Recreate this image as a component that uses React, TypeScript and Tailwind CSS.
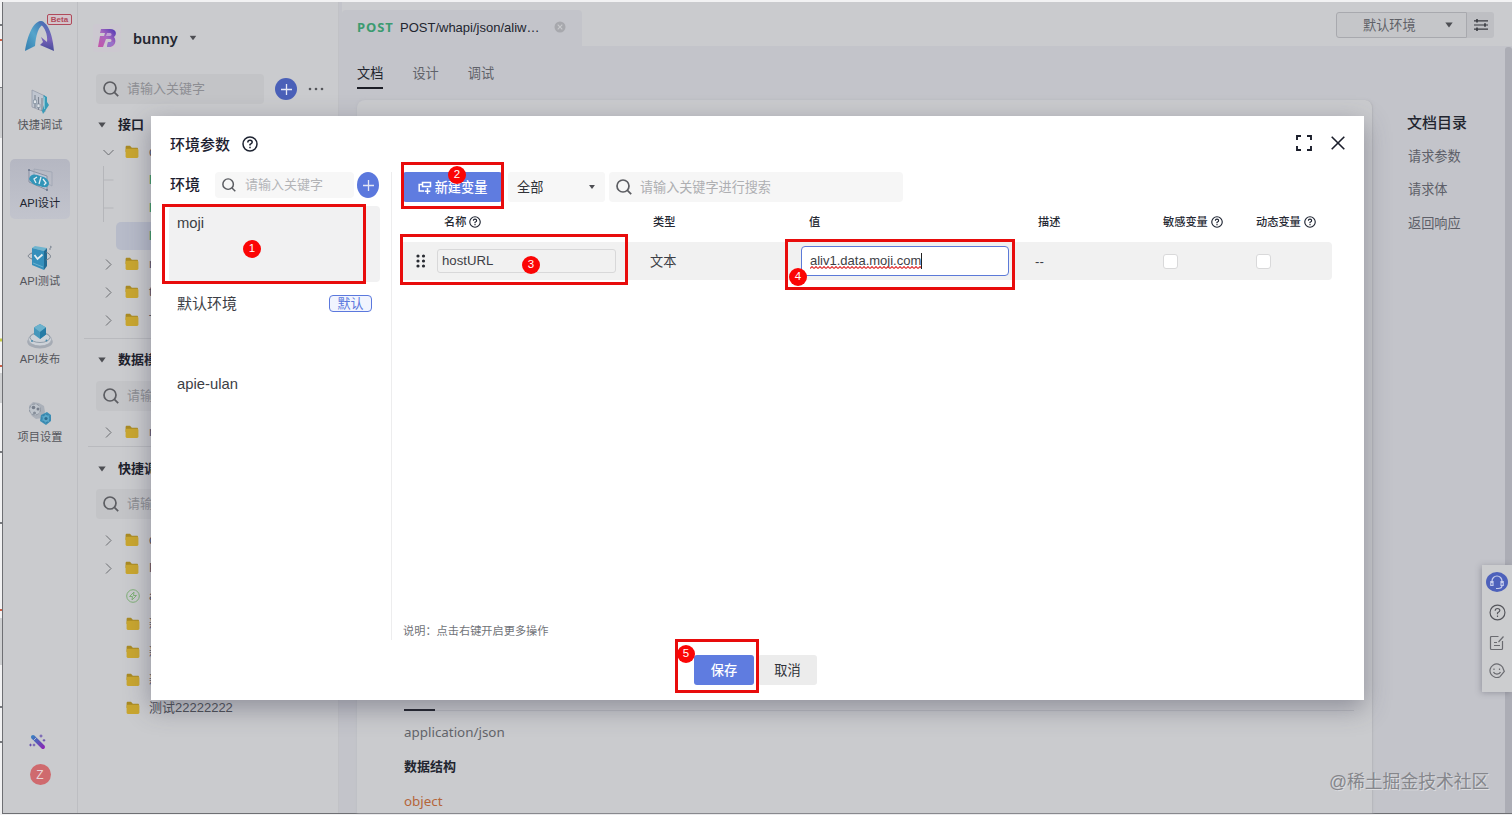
import type { ReactNode } from 'react';
import clsx from 'clsx';

function Search({ size = 16, color = '#5c5d62' }: { size?: number; color?: string }) {
  return (
    <svg width={size} height={size} viewBox="0 0 16 16" fill="none" stroke={color} strokeWidth="1.7" className="shrink-0">
      <circle cx="7" cy="7" r="6" />
      <path d="M11.4 11.4 15.2 15.2" />
    </svg>
  );
}

function Help({ size = 16, color = '#1c2230', stroke = 1.5 }: { size?: number; color?: string; stroke?: number }) {
  return (
    <svg width={size} height={size} viewBox="0 0 16 16" fill="none" stroke={color} strokeWidth={stroke} className="shrink-0">
      <circle cx="8" cy="8" r="7" />
      <path d="M5.8 6.4C5.8 5 6.8 4.2 8 4.2s2.2.8 2.2 2S9 7.8 8 8.4v1.2M8 10.8v1.4" />
    </svg>
  );
}

function Triangle({ className = '', color = '#4d4e53' }: { className?: string; color?: string }) {
  return (
    <svg width="8" height="6" viewBox="0 0 8 6" className={clsx('shrink-0', className)}>
      <path d="M.3.5h7.4L4 5.6z" fill={color} />
    </svg>
  );
}

function Plus({ size = 11 }: { size?: number }) {
  return (
    <svg width={size} height={size} viewBox="0 0 11 11" stroke="#e4e7f5" strokeWidth="1.3">
      <path d="M5.5 0v11M0 5.5h11" />
    </svg>
  );
}

function Folder() {
  return (
    <svg width="14" height="14" viewBox="0 0 14 14" className="shrink-0">
      <path d="M.6 2.200C.6 1.400 1 .8 1.800.8h3.200l1.800 1.900h5c.8 0 1.200.4 1.200 1.200V7H.6z" fill="#a98a24" />
      <rect x=".6" y="3.700" width="12.800" height="9.200" rx="1.300" fill="#c9a62f" />
    </svg>
  );
}

function Logo() {
  return (
    <svg width="32" height="32" viewBox="0 0 32 32">
      <defs>
        <linearGradient id="la" x1="0" y1="1" x2="1" y2="0">
          <stop offset="0" stopColor="#327cae" />
          <stop offset=".5" stopColor="#55a5cb" />
          <stop offset="1" stopColor="#3d6fae" />
        </linearGradient>
        <linearGradient id="lb" x1="0" y1="0" x2="0" y2="1">
          <stop offset="0" stopColor="#4b6fb5" />
          <stop offset=".6" stopColor="#7762b9" />
          <stop offset="1" stopColor="#464a99" />
        </linearGradient>
      </defs>
      <path d="M1 31C3 19 8 1.500 17 1c2 0 3 1 4 3-7 1-9 12-10 22z" fill="url(#la)" />
      <path d="M14 2c10-4 15 15 16 29l-14-6 3-3-2-5 6 5C24 13 20 6 14 2z" fill="url(#lb)" />
    </svg>
  );
}

function TuneIcon() {
  return (
    <svg width="26" height="26" viewBox="0 0 26 26">
      <path d="M5 1l13 6v16L5 18z" fill="#bfc5cf" stroke="#959ca9" strokeWidth=".8" />
      <path d="M8 6v13M11.500 8v13M15 9v13" stroke="#7e8794" strokeWidth="1.100" />
      <path d="M6.500 11h3v3.500h-3zM10 15h3v3.500h-3z" fill="#e0e4e9" stroke="#748494" strokeWidth=".6" />
      <path d="M16.500 6l3.500 2v5l2 3-6 9-1-3 2-6z" fill="#389bb8" />
      <path d="M17.500 8v12" stroke="#80c4d3" />
    </svg>
  );
}

function CodeIcon() {
  return (
    <svg width="28" height="26" viewBox="0 0 28 26" fill="none">
      <path d="M3 3l18 6v14L3 15z" fill="#bcc4d4" stroke="#838b9c" strokeWidth=".9" />
      <path d="M8 2l18 3v14L8 9z" stroke="#a1a7b4" strokeWidth=".9" />
      <path d="M3 12c2-7 8-4 11-3 4 1 8 2 9 7 0 5-5 5-9 3-5 0-9-3-11-7z" fill="#3295b8" />
      <path d="M11 10l-3 2 2 4M17 12l3 4-2 2M15 10l-2 7" stroke="#e4edf2" strokeWidth="1.300" />
      <circle cx="3" cy="3" r="1" fill="#69758b" />
      <circle cx="21" cy="23" r="1" fill="#69758b" />
    </svg>
  );
}

function TestIcon() {
  return (
    <svg width="28" height="26" viewBox="0 0 28 26" fill="none">
      <path d="M6 3l3-2 12 2-3 3z" fill="#6fb5cf" />
      <path d="M6 3l12 3v19L6 20z" fill="#358fbb" />
      <path d="M18 6l3-3v18l-3 4z" fill="#236b93" />
      <path d="M6 8c-5 2-5 4 0 6M20 7c6 3 6 6 0 8" stroke="#747d89" />
      <path d="M8.500 10l3 4 5-4.500" stroke="#e2edf1" strokeWidth="1.800" />
      <path d="M7 18l10 4" stroke="#69b1cf" />
      <path d="M24 1l1.500 1-1.500 1v2" stroke="#7e8794" />
    </svg>
  );
}

function PublishIcon() {
  return (
    <svg width="28" height="26" viewBox="0 0 28 26" fill="none">
      <ellipse cx="14" cy="18.800" rx="12.800" ry="6.700" fill="#a5abb4" />
      <ellipse cx="14" cy="16.500" rx="11.500" ry="6.500" fill="#cdd2d8" stroke="#a2a8b1" strokeWidth=".8" />
      <ellipse cx="14" cy="14.500" rx="10" ry="5" stroke="#8b99a5" strokeWidth=".9" />
      <path d="M14 1l6 3.500v7L14 16l-6-4.500v-7z" fill="#4697bb" />
      <path d="M14 1l6 3.500L14 9 8 4.500z" fill="#6cb2cd" />
      <path d="M14 9l6-4.500v7L14 16z" fill="#267ba5" />
      <circle cx="6" cy="18" r="1" fill="#478caf" />
      <circle cx="20.500" cy="17.500" r="1" fill="#478caf" />
    </svg>
  );
}

function GearsIcon() {
  return (
    <svg width="28" height="26" viewBox="0 0 28 26" fill="none">
      <path d="M3 5l4-4 6 1 5 3 1 6-3 6-6 1-4-3-3-5z" fill="#aab0b9" />
      <circle cx="9" cy="8.500" r="5.500" fill="#bfc5cc" stroke="#8f96a1" strokeWidth="1" strokeDasharray="3 1.500" />
      <circle cx="7.500" cy="6.500" r="1.800" fill="#767e8b" />
      <circle cx="12" cy="8" r="1.500" fill="#767e8b" />
      <circle cx="8.500" cy="12" r="1.500" fill="#858d99" />
      <path d="M15 14l6-3 4 3v6l-5 4-6-4z" fill="#3d8fb5" />
      <circle cx="20" cy="17.500" r="4" fill="#5ba8c9" stroke="#3884ab" strokeWidth="1.200" strokeDasharray="2.500 1.200" />
      <circle cx="20" cy="17.500" r="1.600" fill="#2d6d91" />
    </svg>
  );
}

function Wand() {
  return (
    <svg width="18" height="16" viewBox="0 0 18 16">
      <defs>
        <linearGradient id="w" gradientUnits="userSpaceOnUse" x1="3" y1="2" x2="15" y2="14">
          <stop offset="0" stopColor="#397ec0" />
          <stop offset=".5" stopColor="#5a55b8" />
          <stop offset="1" stopColor="#8d25b6" />
        </linearGradient>
      </defs>
      <path d="M4 3l10 10" stroke="url(#w)" strokeWidth="4" strokeLinecap="round" />
      <path d="M4.300 6.700l3-3" stroke="#b8c4d8" strokeWidth=".9" />
      <path d="M12 .5v3M10.500 2h3M15 5v2.600M13.700 6.300h2.600M1.500 9.700v2.600M.2 11h2.600M5 9.700v2.600M3.700 11h2.600" stroke="#674fae" strokeWidth="1" />
    </svg>
  );
}

const railItems: { label: string; icon: ReactNode; active?: boolean }[] = [
  { label: '快捷调试', icon: <TuneIcon /> },
  { label: 'API设计', icon: <CodeIcon />, active: true },
  { label: 'API测试', icon: <TestIcon /> },
  { label: 'API发布', icon: <PublishIcon /> },
  { label: '项目设置', icon: <GearsIcon /> },
];

function Rail() {
  return (
    <nav className="flex w-[75px] shrink-0 flex-col items-center border-r border-[#bdbec2]">
      <div className="flex h-[79px] items-start pt-[18px]">
        <div className="relative">
          <Logo />
          <span className="absolute -top-[6px] left-[23px] flex h-[11px] w-[25px] items-center justify-center rounded-[2px] border border-[#b04a5b] bg-[#d3c4ca] text-[8px] font-bold leading-none text-[#b04a5b]">
            Beta
          </span>
        </div>
      </div>
      <div className="flex flex-col gap-[18px]">
        {railItems.map((item) => (
          <div
            key={item.label}
            className={clsx(
              'flex h-[60px] w-[60px] flex-col items-center rounded-[5px] pt-[7px] text-[11.2px] whitespace-nowrap',
              item.active ? 'bg-linear-to-b from-[#b5b7c2] to-[#c2c4cd] text-[#20242f]' : 'text-[#54565c]',
            )}
          >
            <div className="flex h-[27px] items-center">{item.icon}</div>
            <span className="mt-[1px] leading-[18px]">{item.label}</span>
          </div>
        ))}
      </div>
      <div className="mt-auto flex flex-col items-center gap-[14px] pb-[28px]">
        <div className="-ml-[4px]">
          <Wand />
        </div>
        <div className="flex size-[21px] items-center justify-center rounded-full bg-[#cf6a6e] text-[12px] text-[#e8d4d7]">Z</div>
      </div>
    </nav>
  );
}

function Row({ kind, text, arrow, selected }: { kind: 'folder' | 'bolt' | 'post'; text: string; arrow?: 'right' | 'down'; selected?: boolean }) {
  return (
    <div className="flex h-[28px] items-center pl-[18px] text-[13px] text-[#4d4f56]">
      <div className={clsx('flex h-full flex-1 items-center rounded-l-[5px]', selected ? 'ml-[20px] bg-[#b7bbc9] pl-[10px]' : 'pl-[7px]')}>
        {!selected && (
          <div className="flex w-[13px] shrink-0 items-center">
            {arrow && (
              <svg width="11" height="11" viewBox="0 0 11 11" fill="none" stroke="#6b6c71" strokeWidth="1">
                <path d={arrow === 'down' ? 'M.5 3 5.500 8 10.500 3' : 'M3 .5 8 5.500 3 10.500'} />
              </svg>
            )}
            {kind === 'post' && (
              <svg width="12" height="28" viewBox="0 0 12 28" fill="none" stroke="#b5b6ba">
                <path d="M.5 0v28M.5 14h10" />
              </svg>
            )}
          </div>
        )}
        <div className={clsx('flex items-center', selected ? 'w-[23px]' : 'w-[33px]', !selected && (kind !== 'folder' || !arrow ? 'pl-[10px]' : 'pl-[9px]'))}>
          {kind === 'folder' && <Folder />}
          {kind === 'bolt' && (
            <svg width="14" height="14" viewBox="0 0 14 14" fill="none" stroke="#7fb077" strokeWidth="1">
              <circle cx="7" cy="7" r="6.300" />
              <path d="M8 3 3.500 7.500h3L6 11l4.500-4.500h-3z" />
            </svg>
          )}
        </div>
        <span className={clsx('whitespace-nowrap', kind === 'post' && 'text-[12px] font-bold text-[#2d9b68]')}>{text}</span>
      </div>
    </div>
  );
}

function SideSearch({ text, wide }: { text: string; wide?: boolean }) {
  return (
    <div className={clsx('flex h-[30px] items-center gap-[8px] rounded-[4px] bg-[#c3c4c7] pl-[7px] text-[13px] text-[#8d8e93]', wide ? 'w-[168px]' : 'w-[220px]')}>
      <Search />
      {text}
    </div>
  );
}

function SideTitle({ text }: { text: string }) {
  return (
    <div className="flex h-[28px] items-center gap-[12px] pt-px pl-[20px] text-[13px] font-bold text-[#1c202b]">
      <Triangle />
      {text}
    </div>
  );
}

function SidePanel() {
  return (
    <aside className="w-[261px] shrink-0 overflow-hidden border-r border-[#c1c2c6]">
      <div className="flex h-[72px] items-center pl-[15px]">
        <div className="flex size-[28px] items-center justify-center rounded-[3px] bg-[#ccc8d0]">
          <svg width="20" height="20" viewBox="0 0 20 20">
            <defs>
              <linearGradient id="b" x1="0" y1="1" x2="1" y2="0">
                <stop offset="0" stopColor="#c652a6" />
                <stop offset=".5" stopColor="#a869c0" />
                <stop offset="1" stopColor="#4a35b3" />
              </linearGradient>
            </defs>
            <path d="M4 1h9c7 0 7 6 4 8 3 4 1 10-5 10h-2l1-5h2c2 0 2-3 0-3H9L6 19H1L3 8h4l1-3H3z" fill="url(#b)" />
            <path d="M10 5h3c2 0 2 3 0 3h-4z" fill="#c1a3d4" />
            <path d="M10 19l1-5h6c-1 3-3 5-6 5z" fill="#9573c9" />
          </svg>
        </div>
        <span className="ml-[12px] w-[56px] font-['Noto_Sans'] text-[14.500px] leading-[20px] font-semibold text-[#22252f]">bunny</span>
        <Triangle className="scale-90" />
      </div>
      <div className="flex h-[30px] items-center pl-[18px]">
        <SideSearch text="请输入关键字" wide />
        <div className="ml-[11px] flex size-[22px] items-center justify-center rounded-full bg-[#4a60b8]">
          <Plus />
        </div>
        <svg width="16" height="4" viewBox="0 0 16 4" fill="#55565b" className="ml-[11px]">
          <circle cx="2" cy="2" r="1.300" />
          <circle cx="8" cy="2" r="1.300" />
          <circle cx="14" cy="2" r="1.300" />
        </svg>
      </div>
      <div className="mt-[6px]">
        <SideTitle text="接口" />
        <Row kind="folder" text="d" arrow="down" />
        <Row kind="post" text="P" />
        <Row kind="post" text="P" />
        <Row kind="post" text="P" selected />
        <Row kind="folder" text="m" arrow="right" />
        <Row kind="folder" text="t" arrow="right" />
        <Row kind="folder" text="T" arrow="right" />
      </div>
      <div className="mt-[4px] ml-[6px] border-t border-[#b9babe]" />
      <div className="mt-[6px]">
        <SideTitle text="数据模型" />
      </div>
      <div className="mt-[8px] mb-[7px] pl-[18px]">
        <SideSearch text="请输入" />
      </div>
      <Row kind="folder" text="m" arrow="right" />
      <div className="ml-[10px] border-t border-[#b9babe]" />
      <div className="mt-[7px]">
        <SideTitle text="快捷调试" />
      </div>
      <div className="mt-[7px] mb-[7px] pl-[18px]">
        <SideSearch text="请输入" />
      </div>
      <Row kind="folder" text="d" arrow="right" />
      <Row kind="folder" text="P" arrow="right" />
      <Row kind="bolt" text="a" />
      <Row kind="folder" text="新" />
      <Row kind="folder" text="新" />
      <Row kind="folder" text="新" />
      <Row kind="folder" text="测试22222222" />
    </aside>
  );
}

function Main() {
  return (
    <main className="flex min-w-0 flex-1 flex-col bg-[#c3c4ca] pl-[3px]">
      <header className="flex h-[44px] shrink-0 items-end justify-between bg-[#cacbce]">
        <div className="flex h-[36px] w-[240px] items-center rounded-t-[4px] bg-[#c3c4ca] pl-[15px]">
          <span className="w-[43px] font-['Noto_Sans'] text-[13px] font-bold tracking-[0.9px] text-[#3b9b70]">POST</span>
          <span className="w-[154px] text-[13px] whitespace-nowrap text-[#22252f]">POST/whapi/json/aliw…</span>
          <svg width="12" height="12" viewBox="0 0 12 12" className="mb-[2px]">
            <circle cx="6" cy="6" r="5.500" fill="#a7a8ad" />
            <path d="M3.700 3.700l4.600 4.600M8.300 3.700l-4.600 4.600" stroke="#c9cacd" strokeWidth="1.100" />
          </svg>
        </div>
        <div className="mr-[18px] mb-[8px] flex h-[26px]">
          <div className="flex w-[131px] items-center rounded-l-[3px] border border-[#a8a9ae] bg-[#c5c6c9] pl-[26px] text-[13.200px] text-[#5f6167]">
            <span className="w-[82px] pt-[2px]">默认环境</span>
            <Triangle />
          </div>
          <div className="flex w-[27px] items-center justify-center rounded-r-[3px] bg-[#bebfc3]">
            <svg width="14" height="12" viewBox="0 0 14 12" stroke="#383a40" strokeWidth="1.200">
              <path d="M0 1.800h14M0 6h14M0 10.200h14" />
              <path d="M3 0v3.600M11 4.200v3.600M3 8.400V12" strokeWidth="1.600" />
            </svg>
          </div>
        </div>
      </header>
      <div className="flex min-h-0 flex-1">
        <div className="flex w-[1031px] flex-col pl-[15px]">
          <div className="flex h-[54px] gap-[29px] pt-[15px] text-[13.200px] text-[#606269]">
            <span className="flex h-[28px] items-center border-b-2 border-[#1b1d26] text-[#22252f]">文档</span>
            <span className="flex h-[28px] items-center pb-[2px]">设计</span>
            <span className="flex h-[28px] items-center pb-[2px]">调试</span>
          </div>
          <section className="flex flex-1 flex-col justify-end rounded-t-[8px] border-r border-[#b7b8bd] bg-[#cacbce] pr-[46px] pl-[47px] shadow-[0_0_3px_#b9bac0]">
            <div className="mr-[-28px] border-b border-[#b9babf]">
              <div className="-mb-px h-[2px] w-[31px] bg-[#20222b]" />
            </div>
            <div className="flex h-[102px] flex-col font-['Noto_Sans','Noto_Sans_CJK_SC',sans-serif] text-[13px] text-[#63656a]">
              <span className="mt-[11px] text-[13.400px] leading-[20px]">application/json</span>
              <span className="mt-[14px] leading-[20px] font-bold text-[#22252f]">数据结构</span>
              <span className="mt-[15px] text-[13.400px] leading-[20px] text-[#b5663b]">object</span>
            </div>
          </section>
        </div>
        <div className="flex flex-1 flex-col pt-[66px] pl-[34px] text-[13.200px] text-[#5d5f68]">
          <h2 className="mb-[6px] text-[15px] leading-[22px] font-medium text-[#22252f]">文档目录</h2>
          <span className="flex h-[33px] items-center pl-px">请求参数</span>
          <span className="flex h-[34px] items-center pl-px">请求体</span>
          <span className="flex h-[34px] items-center pl-px">返回响应</span>
        </div>
        <div className="mt-px w-[7px] rounded-t-[3px] bg-[#acadb5]" />
      </div>
    </main>
  );
}

function FloatingTools() {
  return (
    <div className="absolute top-[565px] left-[1482px] flex h-[127px] w-[30px] flex-col items-center bg-[#cccdcf] pt-[7px] shadow-[-1px_1px_6px_rgba(70,70,85,0.35)]">
      <div className="flex h-[20px] w-[22px] items-center justify-center rounded-[50%] bg-[#4d61bb]">
        <svg width="14" height="15" viewBox="0 0 14 15" fill="none" stroke="#c6cdec" strokeWidth="1.200">
          <path d="M2 8V6a5 5 0 0 1 10 0v2M2 6.500H.8v4H3v-4zM12 6.500h1.200v4H11v-4zM12 10.500c0 2-2 3-4 3H6" />
        </svg>
      </div>
      <div className="mt-[12px]">
        <Help size={17} color="#55565c" stroke={1.1} />
      </div>
      <svg width="16" height="16" viewBox="0 0 16 16" fill="none" stroke="#6a6b70" strokeWidth="1.200" className="mt-[14px]">
        <path d="M9.500 1.500H2.500q-1 0-1 1v11q0 1 1 1h10q1 0 1-1V6M14.500 1.500l-5 5.500M5 7.500h3M5 10.500h6" />
      </svg>
      <svg width="16" height="16" viewBox="0 0 16 16" fill="none" stroke="#6a6b70" strokeWidth="1.200" className="mt-[12px]">
        <path d="M13.500 4A6.800 6.800 0 1 0 11 13.700M13.500 4l1.800 4.500L11 13.700M4.500 9c1 2.700 6 2.700 7 0" />
        <path d="M5 5.500v1.500M10.500 5.500v1.500" />
      </svg>
    </div>
  );
}

function EnvList() {
  return (
    <div className="flex h-[468px] w-[241px] flex-col border-r border-[#ededee] pl-[18px]">
      <div className="flex h-[26px] items-center">
        <span className="w-[46px] pl-px text-[15px] font-medium text-[#1c2030]">环境</span>
        <div className="flex h-[26px] w-[139px] items-center gap-[9px] rounded-[4px] bg-[#f7f7f7] pl-[7px] text-[13px] text-[#b3b4b7]">
          <Search size={14} color="#595b60" />
          请输入关键字
        </div>
        <div className="ml-[3px] flex h-[26px] w-[22px] items-center justify-center rounded-[50%] bg-[#5b78dd]">
          <Plus />
        </div>
      </div>
      <div className="mt-[8px] flex h-[76px] w-[211px] rounded-[4px] bg-[#f1f1f2] pt-[7px] pl-[8px] text-[14.800px] leading-[20px] text-[#3c3e45]">moji</div>
      <div className="mt-[11px] flex h-[21px] w-[203px] items-center justify-between pl-[8px] text-[15px] text-[#3c3e45]">
        <span className="pt-px">默认环境</span>
        <span className="flex h-[17px] w-[43px] items-center justify-center rounded-[4px] border border-[#5b78dd] bg-[#f1f4fe] pt-px text-[13px] text-[#5b78dd]">默认</span>
      </div>
      <div className="mt-[60px] pl-[8px] text-[14.800px] leading-[20px] text-[#3c3e45]">apie-ulan</div>
    </div>
  );
}

function VariablePane() {
  return (
    <div className="flex h-[468px] flex-1 flex-col pl-[9px]">
      <div className="flex h-[30px] items-center">
        <button className="ml-[2px] flex h-[30px] w-[99px] items-center justify-center gap-[3px] rounded-[3px] bg-[#5f7ce0] pt-px text-[13.200px] font-medium text-white">
          <svg width="14" height="14" viewBox="0 0 14 14" fill="none" stroke="white" strokeWidth="1.500">
            <path d="M4.500 1.500h8v4h-8zM4.500 3.500H1.200v6.500H6M9.500 7v6M6.800 10.200h5.500" />
          </svg>
          新建变量
        </button>
        <div className="ml-[6px] flex h-[30px] w-[97px] items-center rounded-[3px] bg-[#f7f7f7] pl-[9px] text-[13.200px] text-[#303238]">
          <span className="w-[71px] pt-px">全部</span>
          <Triangle className="scale-[.8]" />
        </div>
        <div className="ml-[4px] flex h-[30px] w-[294px] items-center gap-[8px] rounded-[4px] bg-[#f6f6f6] pl-[7px] text-[13.100px] text-[#aeafb2]">
          <Search />
          <span className="pt-px">请输入关键字进行搜索</span>
        </div>
      </div>
      <div className="mt-[8px] grid h-[24px] w-[931px] grid-cols-[43px_209px_156px_229px_125px_93px_76px] items-center text-[11.200px] font-medium whitespace-nowrap text-[#252832]">
        <span />
        <span className="flex items-center gap-[3px]">
          名称
          <Help size={12} />
        </span>
        <span>类型</span>
        <span>值</span>
        <span>描述</span>
        <span className="flex items-center gap-[3px]">
          敏感变量
          <Help size={12} />
        </span>
        <span className="flex items-center gap-[3px]">
          动态变量
          <Help size={12} />
        </span>
      </div>
      <div className="mt-[8px] grid h-[38px] w-[931px] grid-cols-[36px_213px_151px_234px_128px_93px_76px] items-center rounded-r-[4px] bg-[#f1f1f1] text-[13.200px] text-[#3c3e45]">
        <svg width="10" height="14" viewBox="0 0 10 14" fill="#292c33" className="ml-[15px]">
          <circle cx="2" cy="2" r="1.600" />
          <circle cx="7.500" cy="2" r="1.600" />
          <circle cx="2" cy="7" r="1.600" />
          <circle cx="7.500" cy="7" r="1.600" />
          <circle cx="2" cy="12" r="1.600" />
          <circle cx="7.500" cy="12" r="1.600" />
        </svg>
        <div className="flex h-[24px] w-[179px] items-center rounded-[3px] border border-[#d8d8d9] pl-[4px]">hostURL</div>
        <span className="pt-px">文本</span>
        <div className="flex h-[30px] w-[208px] items-center rounded-[4px] border border-[#5c7ad8] bg-white pl-[8px]">
          <span className="relative border-r border-[#222] text-[13px] leading-[16px]">
            aliv1.data.moji.com
            <svg width="111" height="3" className="absolute bottom-0 left-0" fill="none">
              <defs>
                <pattern id="sq" width="4" height="3" patternUnits="userSpaceOnUse">
                  <path d="M0 2.500 2 .5 4 2.500" stroke="#e03434" strokeWidth="1.100" />
                </pattern>
              </defs>
              <rect width="111" height="3" fill="url(#sq)" />
            </svg>
          </span>
        </div>
        <span className="pt-px">--</span>
        <span className="size-[15px] rounded-[3px] border border-[#d9d9da] bg-white" />
        <span className="size-[15px] rounded-[3px] border border-[#d9d9da] bg-white" />
      </div>
      <p className="mt-auto ml-[2px] text-[11.200px] leading-[18px] text-[#717378]">说明：点击右键开启更多操作</p>
    </div>
  );
}

function Modal() {
  return (
    <div className="absolute top-[116px] left-[151px] flex h-[584px] w-[1213px] flex-col bg-white shadow-[0_8px_24px_rgba(60,60,80,0.42)]">
      <div className="flex h-[56px] shrink-0 items-center pl-[19px] text-[15px] font-medium text-[#1c2030]">
        <span className="mr-[12px] pt-[2px]">环境参数</span>
        <Help size={16} />
        <svg width="16" height="16" viewBox="0 0 16 16" fill="none" stroke="#1b1e2b" strokeWidth="1.900" className="mr-[19px] mb-[3px] ml-auto">
          <path d="M1 5V1h4M11 1h4v4M15 11v4h-4M5 15H1v-4" />
        </svg>
        <svg width="14" height="14" viewBox="0 0 14 14" stroke="#1b1e2b" strokeWidth="1.600" className="mr-[19px] mb-[3px]">
          <path d="M.7.700l12.600 12.600M13.300.700.700 13.300" />
        </svg>
      </div>
      <div className="flex">
        <EnvList />
        <VariablePane />
      </div>
      <div className="mt-[15px] flex h-[30px] gap-[4px] pl-[543px] text-[13.200px]">
        <button className="w-[60px] rounded-[3px] bg-[#5f7ce0] pt-[2px] font-medium text-white">保存</button>
        <button className="w-[59px] rounded-[3px] bg-[#ececec] pt-[2px] text-[#303238]">取消</button>
      </div>
    </div>
  );
}

function Step({ box, badge, n }: { box: string; badge: string; n: number }) {
  return (
    <>
      <div className={clsx('absolute border-[3px] border-[#e80c0c]', box)} />
      <div className={clsx('absolute flex size-[18px] items-center justify-center rounded-full bg-[#fb0505] text-[11.500px] leading-none text-white', badge)}>{n}</div>
    </>
  );
}

export default function App() {
  return (
    <div className="relative flex h-[815px] w-[1512px] overflow-hidden bg-[#f2f2f3] font-['Liberation_Sans','Noto_Sans_CJK_SC',sans-serif] text-[13px]">
      <svg width="2" height="815" className="shrink-0">
        <path d="M0 25h2M0 88h2M0 452h2M0 523h2M0 707h2M0 742h2" stroke="#77797d" strokeWidth="2" />
        <path d="M0 40h2M0 366h2M0 610h2" stroke="#cc6048" strokeWidth="2" />
        <path d="M0 88v50M0 373v30M0 618v47" stroke="#cfd0d2" strokeWidth="4" />
        <path d="M0 340h2" stroke="#c5c943" strokeWidth="3" />
      </svg>
      <div className="mt-[2px] flex h-[812px] flex-1 border-b border-l border-[#6e6f73] bg-[#cacbce]">
        <Rail />
        <SidePanel />
        <Main />
      </div>
      <FloatingTools />
      <Modal />
      <div className="absolute top-[770px] left-[1329px] text-[17.800px] leading-[24px] whitespace-nowrap text-[#85868b] [text-shadow:1px_1px_0_#dcdde0]">@稀土掘金技术社区</div>
      <Step n={1} box="left-[162px] top-[204px] h-[80px] w-[204px]" badge="left-[243px] top-[240px]" />
      <Step n={2} box="left-[401px] top-[162px] h-[47px] w-[103px]" badge="left-[448px] top-[166px]" />
      <Step n={3} box="left-[400px] top-[234px] h-[51px] w-[228px]" badge="left-[522px] top-[256px]" />
      <Step n={4} box="left-[785px] top-[239px] h-[51px] w-[230px]" badge="left-[789px] top-[268px]" />
      <Step n={5} box="left-[675px] top-[639px] h-[54px] w-[84px]" badge="left-[677px] top-[645px]" />
    </div>
  );
}
